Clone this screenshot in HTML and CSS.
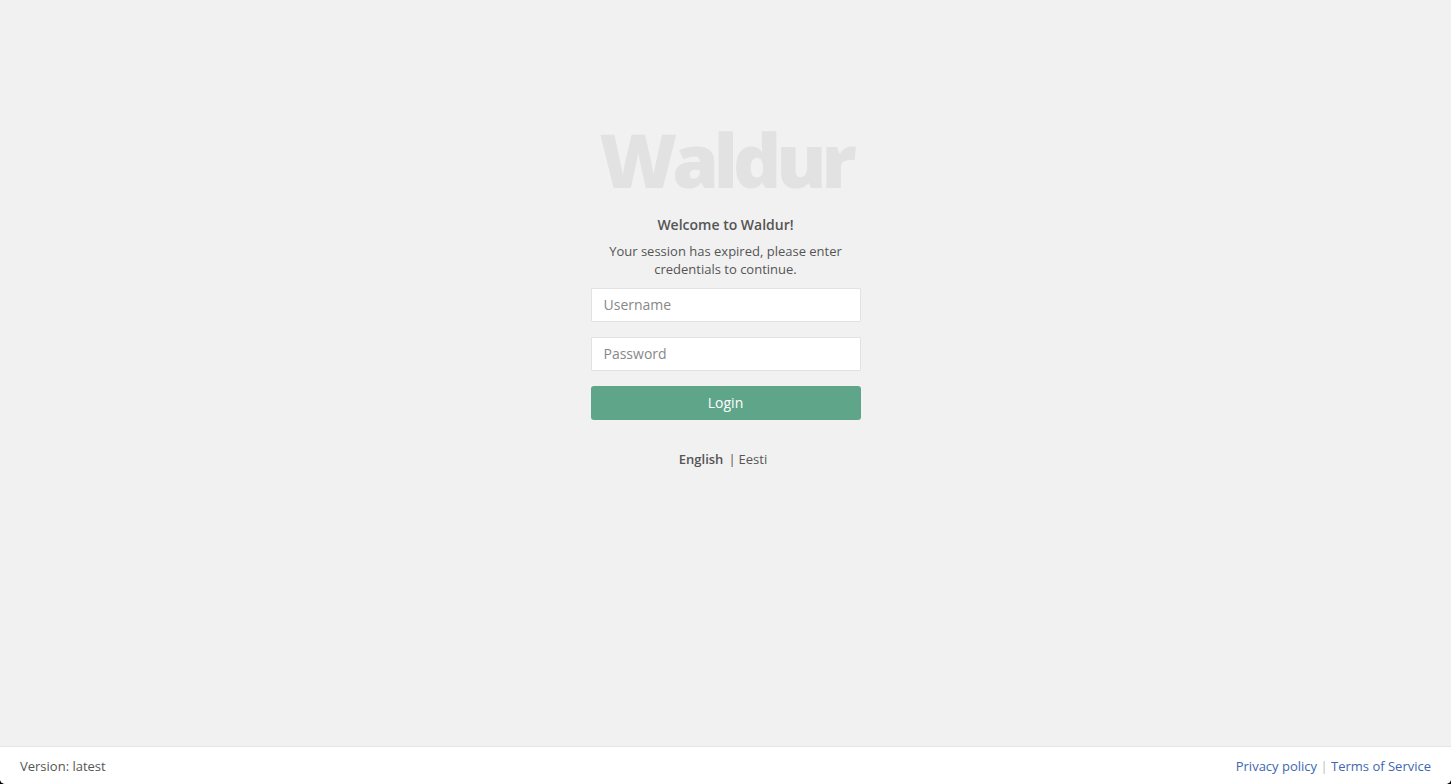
FILE: index.html
```html
<!DOCTYPE html>
<html lang="en">
<head>
<meta charset="utf-8">
<title>Waldur</title>
<link rel="stylesheet" href="styles.css">
</head>
<body>
<main class="login">
  <h1 class="login-brand">Waldur</h1>
  <h2 class="login-title">Welcome to Waldur!</h2>
  <p class="login-message">Your session has expired, please enter credentials to continue.</p>
  <form class="login-form">
    <input class="field" type="text" placeholder="Username" aria-label="Username">
    <input class="field" type="password" placeholder="Password" aria-label="Password">
    <button class="submit" type="submit">Login</button>
  </form>
  <nav class="languages" aria-label="Language">
    <a class="language language-active" href="#en">English</a>
    <span>|</span>
    <a class="language" href="#et">Eesti</a>
  </nav>
</main>
<footer class="footer">
  <span>Version: latest</span>
  <nav class="footer-links" aria-label="Legal">
    <a href="#privacy">Privacy policy</a>
    <span class="divider">|</span>
    <a href="#terms">Terms of Service</a>
  </nav>
</footer>
</body>
</html>
```
FILE: styles.css
```css
* {
  box-sizing: border-box;
}

html {
  background: #000;
}

body {
  margin: 0;
  min-height: 100vh;
  display: flex;
  flex-direction: column;
  border-radius: 0 0 5px 5px;
  background: #f1f1f1;
  color: #555;
  font: 13px/18px "Open Sans", sans-serif;
}

.login {
  flex: 1;
  width: 270px;
  margin: 0 auto;
  padding-top: 106px;
  text-align: center;
}

.login-brand {
  margin: 0 0 2px;
  color: #e2e2e2;
  font-size: 75px;
  font-weight: 800;
  line-height: 106px;
  letter-spacing: -5px;
  white-space: nowrap;
}

.login-title {
  margin: 0 0 6px;
  font-size: 14px;
  font-weight: 600;
  line-height: 22px;
}

.login-message {
  margin: 0;
}

.login-form {
  display: grid;
  gap: 15px;
  margin-top: 10px;
}

.field {
  width: 100%;
  height: 34px;
  padding: 5px 12px 7px;
  border: 1px solid #e1e2e3;
  border-radius: 1px;
  background: #fff;
  color: inherit;
  font: 14px/20px "Open Sans", sans-serif;
}

.field::placeholder {
  color: #888;
}

.submit {
  height: 34px;
  border: 0;
  border-radius: 3px;
  background: #5fa58a;
  color: #fff;
  font: 14px/20px "Open Sans", sans-serif;
}

.languages {
  display: flex;
  justify-content: center;
  gap: 3px;
  margin-top: 30px;
  padding-right: 5px;
}

.language {
  color: inherit;
  text-decoration: none;
}

.language-active {
  margin-right: 2px;
  font-weight: 600;
}

.footer {
  display: flex;
  justify-content: space-between;
  padding: 10px 20px 9px;
  border-top: 1px solid #e5e5e5;
  border-radius: 0 0 5px 5px;
  background: #fff;
}

.footer-links a {
  color: #3e68b0;
  text-decoration: none;
}

.divider {
  color: #bbb;
}
```
